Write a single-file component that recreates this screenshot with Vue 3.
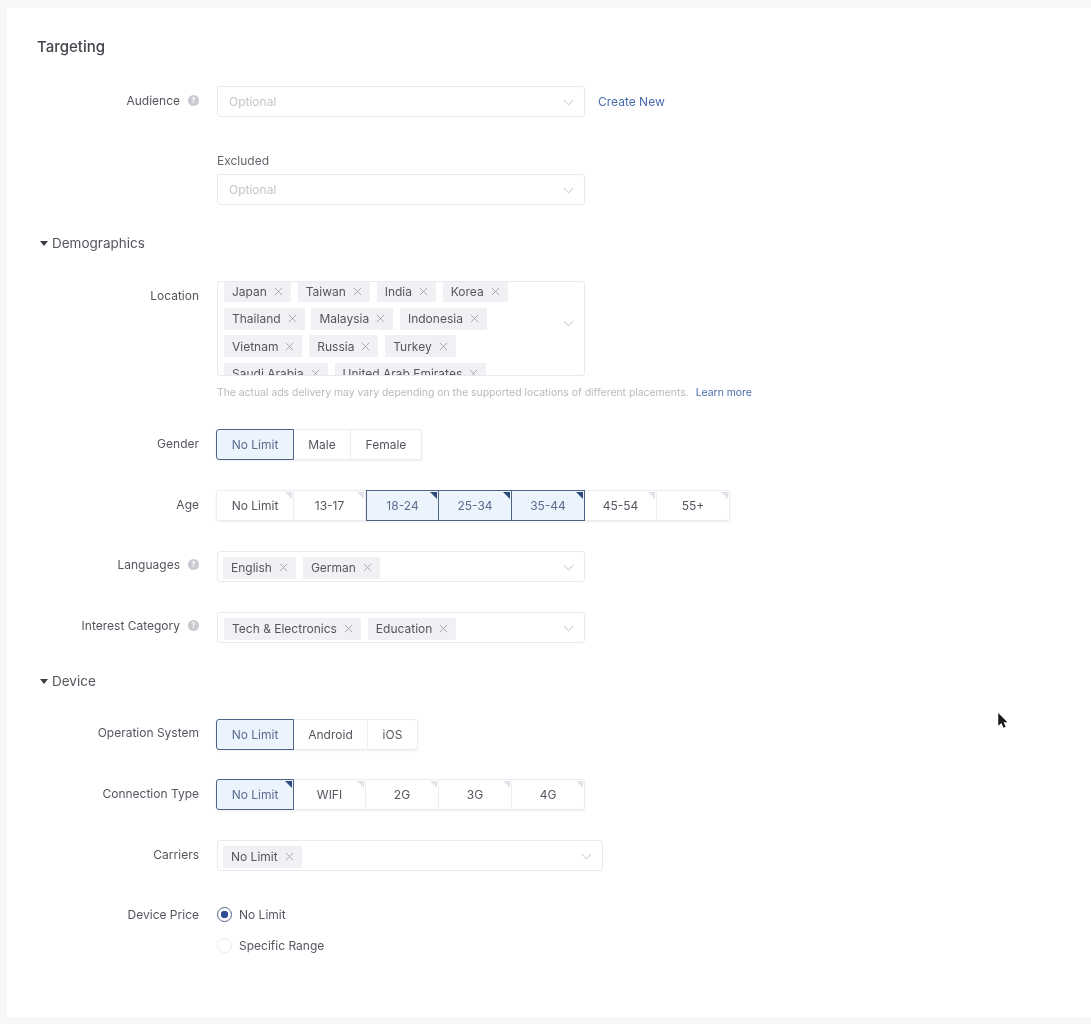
<script setup>
const locations = [
  ['Japan', 'Taiwan', 'India', 'Korea'],
  ['Thailand', 'Malaysia', 'Indonesia'],
  ['Vietnam', 'Russia', 'Turkey'],
  ['Saudi Arabia', 'United Arab Emirates'],
]
const genders = [
  { t: 'No Limit', w: 78, on: true },
  { t: 'Male', w: 57 },
  { t: 'Female', w: 71 },
]
const ages = [
  { t: 'No Limit', w: 78, c: true },
  { t: '13-17', w: 72, c: true },
  { t: '18-24', w: 73, c: true, on: true },
  { t: '25-34', w: 73, c: true, on: true },
  { t: '35-44', w: 73, c: true, on: true },
  { t: '45-54', w: 72, c: true },
  { t: '55+', w: 73, c: true },
]
const systems = [
  { t: 'No Limit', w: 78, on: true },
  { t: 'Android', w: 74 },
  { t: 'iOS', w: 50 },
]
const connections = [
  { t: 'No Limit', w: 78, c: true, on: true },
  { t: 'WIFI', w: 72, c: true },
  { t: '2G', w: 73, c: true },
  { t: '3G', w: 73, c: true },
  { t: '4G', w: 73, c: true },
]
</script>

<template>
  <main class="page">
    <section class="card">
      <h1 class="title">Targeting</h1>

      <div class="row audience">
        <div class="label">Audience<span class="help">?</span></div>
        <div class="select"><span class="placeholder">Optional</span><svg class="chev" viewBox="0 0 12 7"><path d="M1 1l5 5 5-5" /></svg></div>
        <a class="create">Create New</a>
      </div>

      <div class="excluded">
        <div class="ex-label">Excluded</div>
        <div class="select"><span class="placeholder">Optional</span><svg class="chev" viewBox="0 0 12 7"><path d="M1 1l5 5 5-5" /></svg></div>
      </div>

      <h2 class="head"><i class="tri"></i>Demographics</h2>

      <div class="row loc">
        <div class="label">Location</div>
        <div class="select multi-loc">
          <div class="tag-lines">
            <div v-for="(line, i) in locations" :key="i" class="tag-line">
              <span v-for="n in line" :key="n" class="tag">{{ n }}<svg class="x" viewBox="0 0 10 10"><path d="M1 1l8 8M9 1l-8 8" /></svg></span>
            </div>
          </div>
          <svg class="chev" viewBox="0 0 12 7"><path d="M1 1l5 5 5-5" /></svg>
        </div>
      </div>
      <p class="hint">The actual ads delivery may vary depending on the supported locations of different placements.<a>Learn more</a></p>

      <div class="row gender">
        <div class="label">Gender</div>
        <div class="seg">
          <div v-for="s in genders" :key="s.t" class="cell" :class="{ on: s.on }" :style="{ width: s.w + 'px' }">{{ s.t }}</div>
        </div>
      </div>

      <div class="row std">
        <div class="label">Age</div>
        <div class="seg">
          <div v-for="s in ages" :key="s.t" class="cell" :class="{ on: s.on, corner: s.c }" :style="{ width: s.w + 'px' }">{{ s.t }}</div>
        </div>
      </div>

      <div class="row std up">
        <div class="label">Languages<span class="help">?</span></div>
        <div class="select tags">
          <span class="tag">English<svg class="x" viewBox="0 0 10 10"><path d="M1 1l8 8M9 1l-8 8" /></svg></span>
          <span class="tag">German<svg class="x" viewBox="0 0 10 10"><path d="M1 1l8 8M9 1l-8 8" /></svg></span>
          <svg class="chev" viewBox="0 0 12 7"><path d="M1 1l5 5 5-5" /></svg>
        </div>
      </div>

      <div class="row std up">
        <div class="label">Interest Category<span class="help">?</span></div>
        <div class="select tags indent">
          <span class="tag">Tech &amp; Electronics<svg class="x" viewBox="0 0 10 10"><path d="M1 1l8 8M9 1l-8 8" /></svg></span>
          <span class="tag">Education<svg class="x" viewBox="0 0 10 10"><path d="M1 1l8 8M9 1l-8 8" /></svg></span>
          <svg class="chev" viewBox="0 0 12 7"><path d="M1 1l5 5 5-5" /></svg>
        </div>
      </div>

      <h2 class="head"><i class="tri"></i>Device</h2>

      <div class="row os up">
        <div class="label">Operation System</div>
        <div class="seg">
          <div v-for="s in systems" :key="s.t" class="cell" :class="{ on: s.on }" :style="{ width: s.w + 'px' }">{{ s.t }}</div>
        </div>
      </div>

      <div class="row conn">
        <div class="label">Connection Type</div>
        <div class="seg">
          <div v-for="s in connections" :key="s.t" class="cell" :class="{ on: s.on, corner: s.c }" :style="{ width: s.w + 'px' }">{{ s.t }}</div>
        </div>
      </div>

      <div class="row std">
        <div class="label">Carriers</div>
        <div class="select tags wide">
          <span class="tag">No Limit<svg class="x" viewBox="0 0 10 10"><path d="M1 1l8 8M9 1l-8 8" /></svg></span>
          <svg class="chev" viewBox="0 0 12 7"><path d="M1 1l5 5 5-5" /></svg>
        </div>
      </div>

      <div class="row price">
        <div class="label">Device Price</div>
        <div class="radios">
          <div class="radio-row"><span class="radio checked"></span>No Limit</div>
          <div class="radio-row"><span class="radio"></span>Specific Range</div>
        </div>
      </div>
    </section>

    <svg class="cursor" viewBox="0 0 10 16"><path d="M1 1v12l3-2.6 2 4.4 2-1-2-4.2h3.6z" /></svg>
  </main>
</template>

<style>
html, body { margin: 0; background: #f8f8fb; }
</style>

<style scoped>
.page {
  position: relative;
  width: 1091px;
  height: 1024px;
  padding-top: 8px;
  box-sizing: border-box;
  overflow: hidden;
  font-family: Inter, "Liberation Sans", sans-serif;
  font-size: 12px;
  color: #4c4c56;
}
.card {
  margin-left: 7px;
  height: 1009px;
  box-sizing: border-box;
  padding-top: 27px;
  background: #fff;
  filter: blur(0.3px);
}
.title {
  margin: 0 0 0 30px;
  font-size: 15px;
  line-height: 24px;
  font-weight: 500;
  color: #44444c;
}
.row {
  display: grid;
  grid-template-columns: 192px auto 1fr;
  column-gap: 18px;
  align-items: start;
}
.audience { margin-top: 27px; }
.loc { margin-top: 26px; }
.gender { margin-top: 28px; }
.std { margin-top: 30px; }
.os { margin-top: 26px; }
.conn { margin-top: 29px; }
.price { margin-top: 28px; }
.label {
  display: flex;
  justify-content: flex-end;
  align-items: center;
  height: 29px;
  color: #55555f;
  white-space: nowrap;
}
.up .label { height: 27px; }
.price .label { height: 31px; }
.help {
  flex: none;
  width: 11px;
  height: 11px;
  margin-left: 8px;
  border-radius: 50%;
  background: #c9c9cf;
  color: #fff;
  font-size: 8px;
  line-height: 11px;
  text-align: center;
  font-weight: 600;
}
.select {
  position: relative;
  display: flex;
  align-items: center;
  box-sizing: border-box;
  width: 368px;
  height: 31px;
  padding: 0 11px;
  border: 1px solid #e9e9ee;
  border-radius: 3px;
  background: #fff;
}
.placeholder { color: #c4c4ca; }
.chev {
  position: absolute;
  right: 10px;
  top: 50%;
  width: 11px;
  height: 7px;
  margin-top: -3px;
  fill: none;
  stroke: #cfcfd5;
  stroke-width: 1.1;
}
.create {
  align-self: center;
  margin-left: -5px;
  color: #4b6cab;
}
.excluded { margin: 34px 0 0 210px; }
.ex-label {
  height: 20px;
  line-height: 20px;
  margin-bottom: 3px;
  color: #66666f;
}
.head {
  display: flex;
  align-items: center;
  height: 24px;
  margin: 26px 0 0 33px;
  font-size: 13.5px;
  font-weight: 400;
  color: #55555e;
}
.tri {
  width: 0;
  height: 0;
  margin-right: 4px;
  border-left: 4.5px solid transparent;
  border-right: 4.5px solid transparent;
  border-top: 5px solid #3d3d45;
}
.multi-loc {
  height: 95px;
  padding: 0 6px;
  overflow: hidden;
  align-items: flex-start;
}
.multi-loc .chev { top: 38px; margin-top: 0; }
.tag-lines {
  display: flex;
  flex-direction: column;
  row-gap: 5.5px;
  margin-top: -2px;
}
.tag-line { display: flex; column-gap: 6.8px; }
.tag {
  display: inline-flex;
  align-items: center;
  height: 22px;
  padding: 0 8px;
  background: #f0f0f5;
  color: #55555f;
  white-space: nowrap;
}
.x {
  width: 9px;
  height: 9px;
  margin-left: 7px;
  fill: none;
  stroke: #a2a2aa;
  stroke-width: 1;
}
.tags { padding: 2px 5px 0; column-gap: 7px; }
.indent { padding-left: 6px; }
.wide { width: 386px; }
.hint {
  margin: 9px 0 0 210px;
  height: 16px;
  font-size: 10.4px;
  line-height: 16px;
  color: #b8b8bf;
  white-space: nowrap;
}
.hint a { margin-left: 7px; color: #4b6cab; }
.seg {
  display: flex;
  height: 31px;
  margin-left: -1px;
  border-radius: 3px;
  box-shadow: 0 1px 2px rgba(90, 90, 110, 0.1);
}
.cell {
  position: relative;
  box-sizing: border-box;
  height: 31px;
  line-height: 29px;
  text-align: center;
  border: 1px solid #ececf1;
  border-left-width: 0;
  background: #fff;
  color: #55555f;
}
.cell:first-child {
  border-left-width: 1px;
  border-radius: 3px 0 0 3px;
}
.cell:last-child { border-radius: 0 3px 3px 0; }
.cell.on {
  border: 1px solid #4f6485;
  background: #ebf4fd;
  color: #5a6c8c;
}
.cell.on + .cell.on { border-left-width: 0; }
.corner::after {
  content: "";
  position: absolute;
  top: 1px;
  right: 1px;
  border-top: 7px solid #e2e2e8;
  border-left: 7px solid transparent;
}
.on.corner::after { border-top-color: #2c4a7e; }
.radios { display: flex; flex-direction: column; }
.radio-row {
  display: flex;
  align-items: center;
  height: 31px;
  column-gap: 7px;
  color: #55555f;
}
.radio {
  box-sizing: border-box;
  width: 15px;
  height: 15px;
  border: 1px solid #ebebf0;
  border-radius: 50%;
  background: #fff;
}
.radio.checked {
  border-color: #4f6485;
  background: radial-gradient(circle, #2f4f96 0 3.5px, #fff 4px);
}
.cursor {
  position: absolute;
  left: 997px;
  top: 712px;
  width: 11px;
  height: 17px;
  fill: #1a1a1e;
}
</style>
